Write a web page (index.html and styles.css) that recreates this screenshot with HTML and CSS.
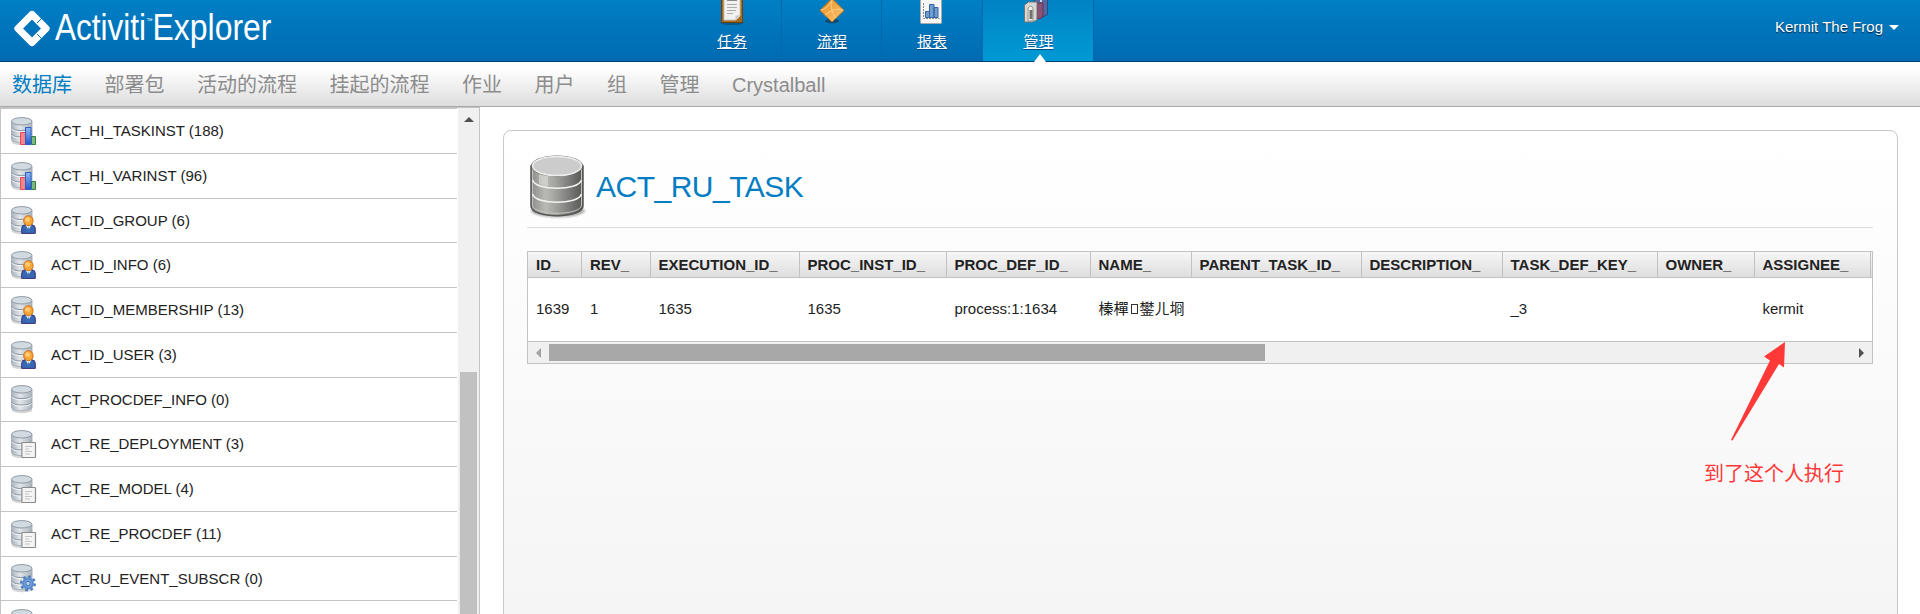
FILE: index.html
```html
<!DOCTYPE html>
<html lang="zh-CN">
<head>
<meta charset="utf-8">
<title>Activiti Explorer</title>
<link rel="stylesheet" href="styles.css">
</head>
<body>
<svg class="defs" width="0" height="0" aria-hidden="true">
  <defs>
    <linearGradient id="cyl" x1="0" x2="1" y1="0" y2="0">
      <stop offset="0" stop-color="#a9b2ba"/><stop offset=".4" stop-color="#e1e6ea"/><stop offset="1" stop-color="#aab3bb"/>
    </linearGradient>
    <linearGradient id="steel" x1="0" x2="1" y1="0" y2="0">
      <stop offset="0" stop-color="#8c8c88"/><stop offset=".28" stop-color="#b9b9b6"/><stop offset=".45" stop-color="#a5a5a2"/><stop offset="1" stop-color="#555553"/>
    </linearGradient>
    <linearGradient id="orange" x1="0" x2="1" y1="0" y2="1">
      <stop offset="0" stop-color="#e98d1c"/><stop offset="1" stop-color="#fbc676"/>
    </linearGradient>
    <linearGradient id="bluebar" x1="0" x2="0" y1="0" y2="1">
      <stop offset="0" stop-color="#8db8f6"/><stop offset="1" stop-color="#2458cc"/>
    </linearGradient>
    <symbol id="db" viewBox="0 0 26 30">
      <ellipse cx="11" cy="25" rx="10.5" ry="3.2" fill="#000" opacity=".16"/>
      <path d="M.5 4.5v18c0 4.3 20.500 4.300 20.500 0v-18z" fill="url(#cyl)" stroke="#a3adb6" stroke-width=".9"/>
      <path d="M.7 10.500c1 4 19 4 20 0M.7 17c1 4 19 4 20 0" fill="none" stroke="#929ca6" stroke-width="1.100"/>
      <path d="M.9 11.700c1 4 18.600 4 19.600 0M.9 18.200c1 4 18.600 4 19.600 0" fill="none" stroke="#f5f7f9" stroke-width="1"/>
      <ellipse cx="10.750" cy="4.300" rx="10.200" ry="3.700" fill="#d2dae1" stroke="#8f9aa5"/>
    </symbol>
    <symbol id="bars" viewBox="0 0 26 30">
      <path d="M9.500 15.500h5v12h-5z" fill="#fb8585" stroke="#e84b57"/>
      <path d="M20.500 19.500h4v8h-4z" fill="#7fba7d" stroke="#31803a"/>
      <path d="M14.500 10.500h5.500v17h-5.500z" fill="url(#bluebar)" stroke="#2a5fc6"/>
    </symbol>
    <symbol id="person" viewBox="0 0 26 30">
      <path d="M10.700 27.400v-5q.2-3.600 3.800-3.600h6.200q3.600.2 3.600 3.600v5z" fill="#3567b5" stroke="#3a3175"/>
      <path d="M14.500 19l3 5 3-5z" fill="#e3ebf7"/><path d="M17.500 20.500l1.300 5h-2.600z" fill="#4b73b4"/>
      <ellipse cx="17.400" cy="14.700" rx="4.700" ry="5" fill="#f5a83a" stroke="#d36c12"/>
      <ellipse cx="16.500" cy="13.500" rx="2.500" ry="2.300" fill="#ffcc74"/>
    </symbol>
    <symbol id="doc" viewBox="0 0 26 30">
      <rect x="10.900" y="12.500" width="13.600" height="15" rx=".8" fill="#f4f4f4" stroke="#8b8b8b" stroke-width="1.200"/>
      <path d="M14 16.500h7M14 19h4M14 21.500h7M14 24h5" stroke="#c4c4c4"/>
    </symbol>
    <symbol id="gear" viewBox="0 0 26 30">
      <circle cx="17" cy="19.500" r="6.800" fill="none" stroke="#4a7cc0" stroke-width="2.400" stroke-dasharray="2.670 2.670"/>
      <circle cx="17" cy="19.500" r="4.800" fill="#7ba8e0" stroke="#5b8ccc" stroke-width="2.200"/>
      <circle cx="17" cy="19.500" r="2.200" fill="#b9cfe9" stroke="#3f71b4"/>
    </symbol>
  </defs>
</svg>

<header class="top">
  <svg class="logo" width="290" height="61" viewBox="0 0 290 61">
    <path d="M32 14.500L46 28.500L32 42.500L18 28.500Z" fill="none" stroke="#fff" stroke-width="7.200" stroke-linejoin="round"/>
    <path d="M37 23l5-5M37 34l5 5" stroke="#0076bd" stroke-width="1"/>
    <text x="55" y="39.500" class="brand" textLength="91" lengthAdjust="spacingAndGlyphs">Activiti</text>
    <text x="146.500" y="23" class="tm" textLength="6" lengthAdjust="spacingAndGlyphs">™</text>
    <text x="152.500" y="39.500" class="brand" textLength="119" lengthAdjust="spacingAndGlyphs">Explorer</text>
  </svg>
  <nav class="main-nav">
    <a class="tab">
      <svg width="26" height="25" viewBox="0 0 26 25"><ellipse cx="13" cy="23" rx="12" ry="2" opacity=".25"/><path d="M2.500-3h21v25.500h-21z" fill="#a8681c" stroke="#6e430e"/><path d="M5-3h16v19l-4 4H5z" fill="#f1f1ef" stroke="#c9c9c5"/><path d="M8-3h10v4H8z" fill="#888a85"/><path d="M8 4.500h10M8 7.500h10M8 10.500h9M8 13.500h6" stroke="#adada9"/><path d="M21 15l-4.500 5v-4z" fill="#c5c5c1"/></svg>
      <span>任务</span></a>
    <a class="tab">
      <svg width="26" height="25" viewBox="0 0 26 25"><ellipse cx="13" cy="21" rx="7" ry="2.500" opacity=".35"/><path d="M13-1.500L25 10.500L13 22L1 10.500Z" fill="url(#orange)" stroke="#cd7411"/><path d="M2 10q7-1 11-10M6 15q10-8 18-5M13 1q-2 11 4 17" fill="none" stroke="#fbd08b"/></svg>
      <span>流程</span></a>
    <a class="tab">
      <svg width="26" height="25" viewBox="0 0 26 25"><rect x="2.500" y="-3" width="21" height="26.500" rx="1" fill="#f6f6f5" stroke="#a7abad"/><path d="M5.500 3v15.500h16" fill="none" stroke="#888" stroke-dasharray="2 1"/><path d="M7.500 11.500h4v6h-4zM11.500 4.500h4.500v13h-4.500zM16 7.500h4v10h-4z" fill="#729fcf" stroke="#3465a4"/></svg>
      <span>报表</span></a>
    <a class="tab active">
      <svg width="28" height="25" viewBox="0 0 28 25"><path d="M12.500-2h13v16.500l-4 2h-9z" fill="#5269a5" stroke="#32487f"/><path d="M15 3h6v14l-3 1.500h-3z" fill="#8b5273" stroke="#633551"/><path d="M2.500 5l4-3h8.500v18l-4 2h-8.500z" fill="#d7d7d3" stroke="#757571"/><path d="M6 8q3-4 5 0v13H6z" fill="#ededeb" stroke="#92928e"/><path d="M7.500 10h3v9h-3z" fill="#73736f"/><path d="M19-2v4" stroke="#cdd5e8" stroke-width="2"/></svg>
      <span>管理</span></a>
  </nav>
  <div class="user">Kermit The Frog<i class="caret"></i></div>
</header>

<nav class="sub-nav">
  <a class="current">数据库</a><a>部署包</a><a>活动的流程</a><a>挂起的流程</a><a>作业</a><a>用户</a><a>组</a><a>管理</a><a class="latin">Crystalball</a>
</nav>

<div class="content">
  <aside class="sidebar">
    <ul class="tables">
      <li><svg><use href="#db"/><use href="#bars"/></svg><span>ACT_HI_TASKINST (188)</span></li>
      <li><svg><use href="#db"/><use href="#bars"/></svg><span>ACT_HI_VARINST (96)</span></li>
      <li><svg><use href="#db"/><use href="#person"/></svg><span>ACT_ID_GROUP (6)</span></li>
      <li><svg><use href="#db"/><use href="#person"/></svg><span>ACT_ID_INFO (6)</span></li>
      <li><svg><use href="#db"/><use href="#person"/></svg><span>ACT_ID_MEMBERSHIP (13)</span></li>
      <li><svg><use href="#db"/><use href="#person"/></svg><span>ACT_ID_USER (3)</span></li>
      <li><svg><use href="#db"/></svg><span>ACT_PROCDEF_INFO (0)</span></li>
      <li><svg><use href="#db"/><use href="#doc"/></svg><span>ACT_RE_DEPLOYMENT (3)</span></li>
      <li><svg><use href="#db"/><use href="#doc"/></svg><span>ACT_RE_MODEL (4)</span></li>
      <li><svg><use href="#db"/><use href="#doc"/></svg><span>ACT_RE_PROCDEF (11)</span></li>
      <li><svg><use href="#db"/><use href="#gear"/></svg><span>ACT_RU_EVENT_SUBSCR (0)</span></li>
      <li><svg><use href="#db"/></svg></li>
    </ul>
    <div class="vscroll"><i class="up"></i><div class="vthumb"></div></div>
  </aside>

  <main class="detail">
    <section class="panel">
      <div class="title">
        <svg width="60" height="66" viewBox="0 0 60 66">
          <ellipse cx="31" cy="57" rx="28" ry="7.500" opacity=".12"/><ellipse cx="31" cy="57" rx="26" ry="6" opacity=".15"/>
          <path d="M4 12v40c0 13 52 13 52 0V12z" fill="url(#steel)" stroke="#555753" stroke-width="1.500"/>
          <path d="M5.500 14v37c0 11 49 11 49 0V14" fill="none" stroke="#c2c2be" stroke-width="1"/>
          <path d="M12 20q5 2 9 2v10q-5 0-9-2z" fill="#deded9" opacity=".6"/>
          <path d="M5.500 26c3 11 46 11 49 0M5.500 40c3 11 46 11 49 0" fill="none" stroke="#f2f2f0" stroke-width="1.600"/>
          <ellipse cx="30" cy="12" rx="26" ry="10.500" fill="#555753"/><ellipse cx="30" cy="12" rx="24.500" ry="9.500" fill="#ccc" stroke="#eee" stroke-width="1.500"/>
        </svg>
        <h1>ACT_RU_TASK</h1>
      </div>
      <div class="grid">
        <div class="row head">
          <div>ID_</div><div>REV_</div><div>EXECUTION_ID_</div><div>PROC_INST_ID_</div><div>PROC_DEF_ID_</div><div>NAME_</div><div>PARENT_TASK_ID_</div><div>DESCRIPTION_</div><div>TASK_DEF_KEY_</div><div>OWNER_</div><div>ASSIGNEE_</div>
        </div>
        <div class="row body">
          <div>1639</div><div>1</div><div>1635</div><div>1635</div><div>process:1:1634</div><div>榛樿<i class="tofu"></i>鐢ㄦ埛</div><div></div><div></div><div>_3</div><div></div><div>kermit</div>
        </div>
        <div class="hscroll"><i class="left"></i><div class="hthumb"></div><i class="right"></i></div>
      </div>
    </section>
  </main>
</div>

<svg class="arrow" width="56" height="100" viewBox="0 0 56 100"><path d="M55 0L34 14.500L40 18.500L1 98L2.500 98.500L49 22L54 25.500Z" fill="#ff3838"/></svg>
<div class="note">到了这个人执行</div>
</body>
</html>
```

FILE: styles.css
```css
* { box-sizing: border-box; }
html { height: 614px; overflow: hidden; }
body {
  margin: 0;
  height: 614px;
  overflow: hidden;
  position: relative;
  background: #fff;
  color: #222;
  font: 15px "Liberation Sans", "Noto Sans CJK SC", sans-serif;
}
.defs { display: block; }
.top {
  height: 62px;
  display: grid;
  grid-template-columns: 682px 1fr auto;
  background: linear-gradient(#007fc5, #006ab1);
  border-bottom: 1px solid #00407a;
}
.logo { display: block; }
.brand { font: 400 37px "Liberation Sans", sans-serif; fill: #fff; }
.tm { font: 7px "Liberation Sans", sans-serif; fill: #fff; }
.main-nav { display: flex; }
.tab {
  width: 100px;
  height: 61px;
  display: flex;
  flex-direction: column;
  align-items: center;
  border-right: 1px solid #0068ac;
  color: #fff;
  font-size: 15px;
  text-decoration: underline;
}
.tab svg { display: block; }
.tab span { line-height: 22px; margin-top: 6px; padding-left: 1px; text-shadow: 0 1px 1px #00508c; }
.tab:nth-child(3) { width: 101px; }
.tab:nth-child(3) svg { margin-right: 2px; }
.tab:nth-child(3) span { padding: 0; }
.tab.active {
  width: 111px;
  position: relative;
  background: linear-gradient(#0082c5, #009ad4);
}
.tab.active svg { margin-right: 4px; }
.tab.active::after {
  content: "";
  position: absolute;
  left: 51px;
  bottom: -1px;
  border: 6px solid transparent;
  border-top: 0;
  border-bottom: 8px solid #fff;
}
.user {
  display: flex;
  align-items: center;
  padding: 0 21px 8px 0;
  color: #fff;
  text-shadow: 0 1px 1px #001f3d;
  font-size: 15px;
}
.caret { margin: 2px 0 0 6px; border: 5px solid transparent; border-top-color: #fff; border-bottom: 0; }
.sub-nav {
  height: 45px;
  display: flex;
  gap: 32.500px;
  padding-left: 12px;
  border-bottom: 1px solid #a9a9a9;
  background: linear-gradient(#fff 15%, #ddd);
  color: #8c8c8c;
  font-size: 20px;
  line-height: 47px;
}
.sub-nav .latin { line-height: 46px; }
.sub-nav .current { color: #007dc3; }
.content { display: flex; height: 507px; overflow: hidden; }
.sidebar {
  width: 480px;
  height: 507px;
  display: flex;
  border: 1px solid #c4c4c4;
  border-bottom: 0;
  overflow: hidden;
}
.tables { width: 456px; margin: 0 1px 0 0; padding: 0; list-style: none; border-top: 1px solid #c4c4c4; }
.tables li {
  height: 45px;
  display: flex;
  align-items: center;
  gap: 14px;
  padding-left: 10px;
  border-bottom: 1px solid #c4c4c4;
}
.tables li:nth-child(4n+3) { height: 44px; }
.tables svg { width: 26px; height: 30px; flex: none; margin-top: 1px; }
.tables span { padding-bottom: 1px; }
.vscroll { width: 21px; background: #f0f0f0; display: flex; flex-direction: column; align-items: center; }
.up { margin: 9px 0 250px; border: 5px solid transparent; border-bottom-color: #505050; border-top: 0; }
.vthumb { width: 17px; margin-right: 1px; flex: 1; background: #c1c1c1; }
.detail { flex: 1; padding: 23px 22px 0 23px; }
.panel {
  height: 600px;
  padding: 20px 24px 0 23px;
  border: 1px solid #c9c9c9;
  border-radius: 8px;
  background: linear-gradient(#fff, #fdfdfd 100px, #fafafa 250px, #f5f5f5 484px);
}
.title {
  height: 77px;
  display: flex;
  align-items: flex-start;
  gap: 9px;
  border-bottom: 1px solid #dcdcdc;
}
.title svg { display: block; margin-top: 3px; }
h1 { margin: 17px 0 0; color: #007dc3; font-size: 30px; letter-spacing: -.5px; line-height: 38px; font-weight: 400; }
.grid { width: 1346px; margin-top: 23px; border: 1px solid #c2c2c2; background: #fff; }
.row { display: grid; grid-template-columns: 54px 69px 149px 147px 144px 101px 170px 141px 155px 97px 116px; }
.row div { padding-left: 8px; white-space: nowrap; }
.head { height: 26px; line-height: 26px; font-size: 15px; font-weight: 700; background: linear-gradient(#f6f6f6, #dedede); border-bottom: 1px solid #c2c2c2; }
.head div { border-right: 1px solid #c2c2c2; }
.body { height: 64px; line-height: 61px; font-size: 15px; border-bottom: 1px solid #c2c2c2; }
.row div:nth-child(n+3) { padding-left: 7.500px; }
.tofu { display: inline-block; width: 7px; height: 10px; margin: 0 2px; border: 1px solid #333; }
.hscroll { height: 21px; display: flex; align-items: center; background: #f0f0f0; }
.left { margin: 0 8px 0 8px; border: 5px solid transparent; border-right-color: #a3a3a3; border-left: 0; }
.hthumb { width: 716px; height: 17px; background: #a8a8a8; }
.right { margin: 0 8px 0 auto; border: 5px solid transparent; border-left-color: #505050; border-right: 0; }
.arrow { position: absolute; left: 1730px; top: 342px; }
.note { position: absolute; left: 1704px; top: 459px; color: #ff3838; font-size: 20px; line-height: 30px; }
```
